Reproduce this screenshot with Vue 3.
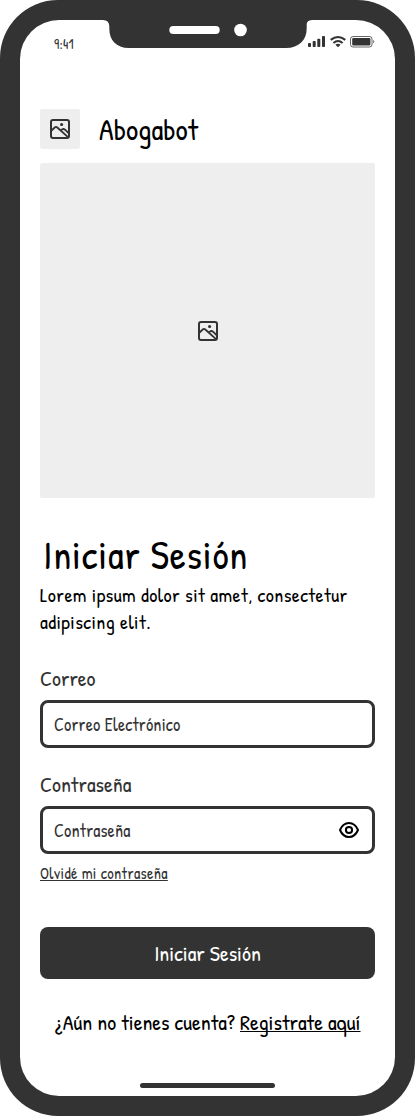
<script setup>
const signalBars = [
  { x: 0, h: 4 },
  { x: 4.7, h: 6 },
  { x: 9.3, h: 8.3 },
  { x: 14, h: 11 },
]
</script>

<template>
  <main class="phone">
    <div class="screen">
      <svg class="notch" width="210" height="28" viewBox="0 0 210 28" aria-hidden="true">
        <path class="fill" d="M0 0H210V-1H0ZM0 0Q6 0 6.3 6V8.500C6.300 20 13 28 26 28H183C196 28 203.700 20 203.700 8.500V4Q204 0 210 0Z" />
        <rect x="66.300" y="6" width="50.400" height="8" rx="4" fill="#fff" />
        <circle cx="137.500" cy="10" r="6.300" fill="#fff" />
      </svg>

      <header class="status">
        <span class="time">9:41</span>
        <div class="indicators">
          <svg width="17" height="12" viewBox="0 0 17 12">
            <rect v-for="bar in signalBars" :key="bar.x" class="fill" :x="bar.x" :y="11 - bar.h" width="3" :height="bar.h" rx="0.8" />
          </svg>
          <svg class="wifi" width="16" height="12" viewBox="0 0 16 12">
            <path class="line" d="M0.700 3.900Q8-2 15.300 3.900M3.400 6.900Q8 3 12.600 6.900" stroke-width="2" />
            <path class="fill" d="M5.400 8.700Q8 6.700 10.600 8.700L8 11.200Z" />
          </svg>
          <svg class="battery" width="25" height="12" viewBox="0 0 25 12">
            <rect class="line" x="0.500" y="0.500" width="21.500" height="10.500" rx="2.500" stroke-width="1" opacity="0.75" />
            <rect class="fill" x="2.200" y="2" width="18.200" height="7.600" rx="1" />
            <path class="fill" d="M23 4Q26 5.700 23 7.500Z" opacity="0.6" />
          </svg>
        </div>
      </header>

      <div class="brand">
        <div class="logo">
          <svg width="20" height="20" viewBox="0 0 20 20">
            <rect class="line" x="1" y="1" width="18" height="18" rx="2" stroke-width="2" />
            <circle class="fill" cx="11.600" cy="5.500" r="1.600" />
            <path class="line" d="M1 12L4.700 8.500Q6 7.300 7.300 8.500L18.300 18.300M10.700 11.300L12 10.500Q13.600 9.500 15 10.700L19 14.500" stroke-width="1.800" />
          </svg>
        </div>
        <span class="name">Abogabot</span>
      </div>

      <div class="hero">
        <svg width="20" height="20" viewBox="0 0 20 20">
          <rect class="line" x="1" y="1" width="18" height="18" rx="2" stroke-width="2" />
          <circle class="fill" cx="11.600" cy="5.500" r="1.600" />
          <path class="line" d="M1 12L4.700 8.500Q6 7.300 7.300 8.500L18.300 18.300M10.700 11.300L12 10.500Q13.600 9.500 15 10.700L19 14.500" stroke-width="1.800" />
        </svg>
      </div>

      <h1 class="title">Iniciar Sesión</h1>
      <p class="intro">Lorem ipsum dolor sit amet, consectetur<br>adipiscing elit.</p>

      <form class="form" @submit.prevent>
        <label class="label">Correo</label>
        <div class="field"><span>Correo Electrónico</span></div>
        <label class="label second">Contraseña</label>
        <div class="field">
          <span>Contraseña</span>
          <svg class="eye" width="20" height="16" viewBox="0 0 20 16">
            <path d="M1 8Q4 1 10 1T19 8Q16 15 10 15T1 8Z" />
            <circle cx="10" cy="8" r="3.100" />
          </svg>
        </div>
        <a class="forgot">Olvidé mi contraseña</a>
        <button class="submit" type="submit">Iniciar Sesión</button>
      </form>

      <p class="register"><span>¿Aún no tienes cuenta? </span><a>Registrate aquí</a></p>
      <div class="home"></div>
    </div>
  </main>
</template>

<style scoped>
.phone {
  box-sizing: border-box;
  width: 415px;
  height: 1116px;
  padding: 20px;
  border-radius: 58px;
  background: #333;
  color: #333;
  font-family: "Patrick Hand", Lato, "Open Sans", sans-serif;
}
.screen {
  position: relative;
  box-sizing: border-box;
  display: flex;
  flex-direction: column;
  height: 1076px;
  padding: 0 20px 8px;
  border-radius: 39px;
  background: #fff;
}
svg {
  display: block;
  flex: none;
  overflow: visible;
}
.notch {
  position: absolute;
  top: 0;
  left: 83px;
}
.fill { fill: #333; }
.line { fill: none; stroke: #333; stroke-linejoin: round; }
.status {
  box-sizing: border-box;
  display: flex;
  justify-content: space-between;
  height: 89px;
  padding: 16px 0 0 14px;
}
.time {
  margin-top: -2px;
  font-size: 14px;
  line-height: 19px;
  letter-spacing: 0.02em;
}
.indicators {
  display: flex;
  gap: 4.500px;
}
.brand {
  display: flex;
  gap: 19px;
  height: 40px;
}
.name {
  color: #000;
  font-size: 30px;
  line-height: 41px;
}
.logo,
.hero {
  display: flex;
  align-items: center;
  justify-content: center;
  background: #eee;
  border-radius: 2px;
}
.logo {
  width: 40px;
  height: 40px;
}
.hero {
  flex: none;
  height: 335px;
  margin-top: 14px;
}
.title {
  margin: 29px 0 0 3px;
  color: #000;
  font-size: 40px;
  font-weight: 400;
  line-height: 54px;
  letter-spacing: 0.02em;
}
.intro {
  margin: 0;
  color: #000;
  font-size: 20px;
  line-height: 27px;
  letter-spacing: 0.02em;
}
.form {
  display: flex;
  flex-direction: column;
  align-items: flex-start;
  margin-top: 28px;
}
.label {
  height: 37px;
  font-size: 22px;
  line-height: 30px;
}
.second { margin-top: 21px; }
.field {
  box-sizing: border-box;
  display: flex;
  align-items: center;
  justify-content: space-between;
  width: 100%;
  height: 48px;
  padding: 0 13px 0 11px;
  border: 3px solid #333;
  border-radius: 8px;
  font-size: 18px;
  line-height: 24px;
  letter-spacing: 0.01em;
}
.field span { padding-top: 2px; }
.eye {
  fill: none;
  stroke: #000;
  stroke-width: 2px;
}
.forgot {
  margin-top: 8px;
  font-size: 16px;
  line-height: 22px;
  letter-spacing: 0.02em;
  text-decoration: underline;
  text-decoration-thickness: 1px;
}
.submit {
  width: 100%;
  height: 52px;
  margin-top: 43px;
  padding: 0;
  border: 0;
  border-radius: 8px;
  background: #333;
  color: #fff;
  font: inherit;
  font-size: 22px;
}
.register {
  margin: 28px 0 0;
  color: #000;
  font-size: 22px;
  line-height: 30px;
  text-align: center;
  white-space: nowrap;
}
.register a {
  text-decoration: underline;
  text-decoration-thickness: 1px;
  text-decoration-skip-ink: none;
}
.home {
  width: 135px;
  height: 5px;
  margin: auto auto 0;
  border-radius: 3px;
  background: #333;
}
</style>
